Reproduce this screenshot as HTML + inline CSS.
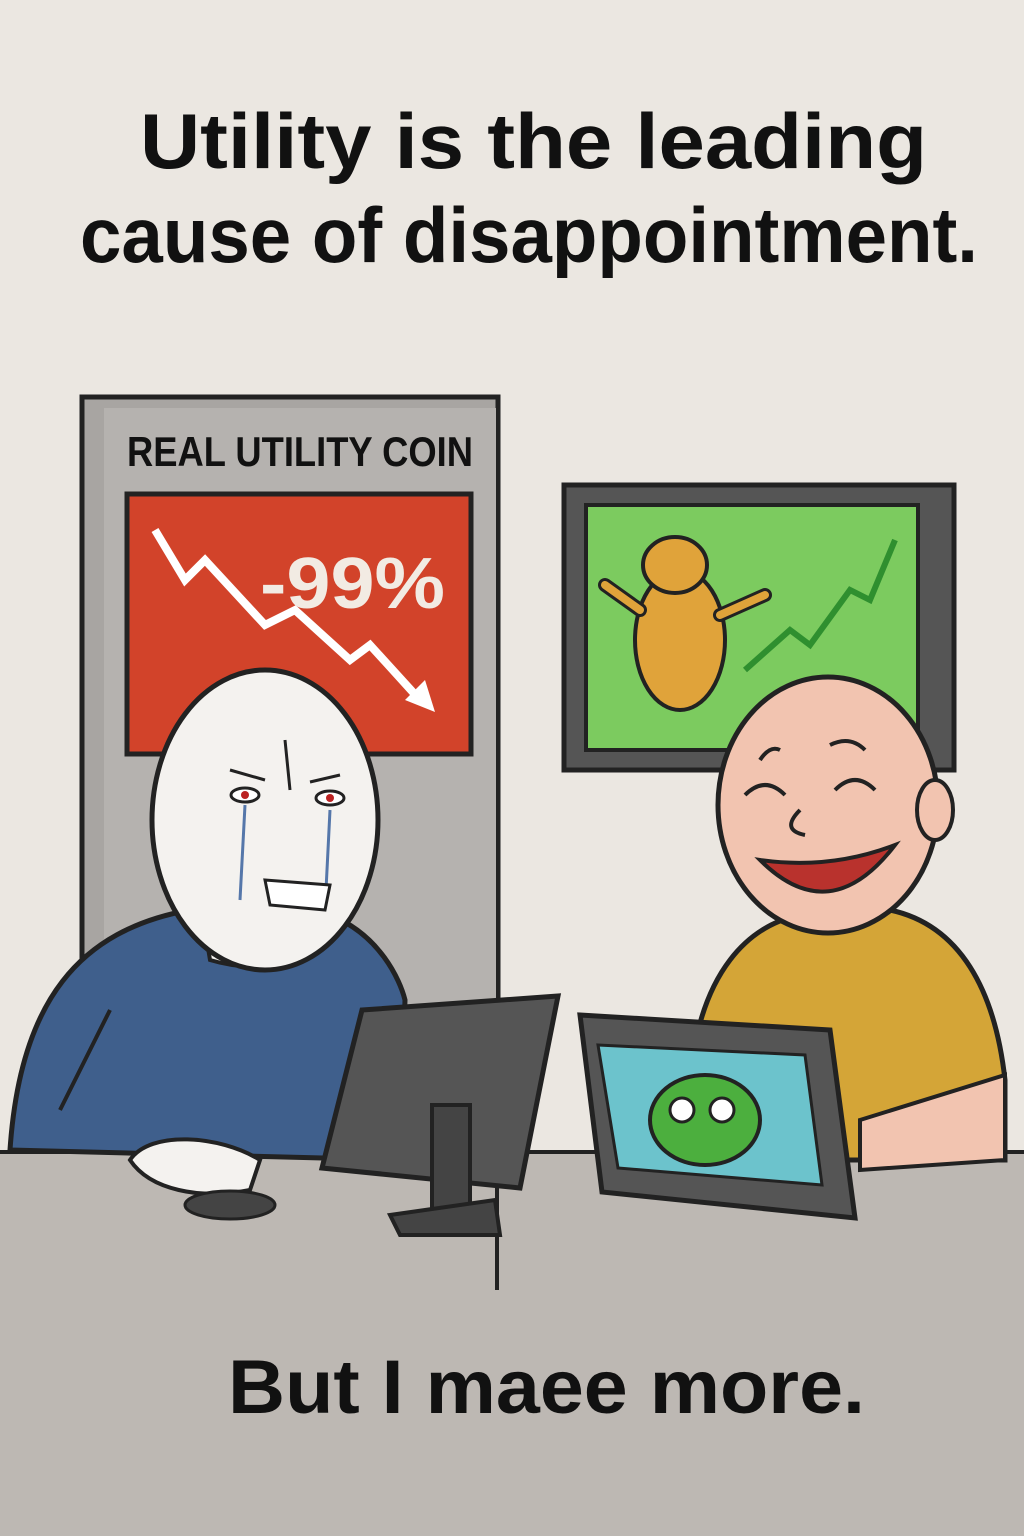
<!DOCTYPE html>
<html><head><meta charset="utf-8"><style>
html,body{margin:0;padding:0;width:1024px;height:1536px;overflow:hidden;background:#ebe7e1}
svg{display:block}
</style></head><body>
<svg width="1024" height="1536" viewBox="0 0 1024 1536" xmlns="http://www.w3.org/2000/svg" font-family="Liberation Sans, sans-serif">
<rect width="1024" height="1536" fill="#ebe7e1"/>
<text x="140" y="168" font-size="78" font-weight="bold" fill="#111" textLength="787" lengthAdjust="spacingAndGlyphs">Utility is the leading</text>
<text x="80" y="262" font-size="78" font-weight="bold" fill="#111" textLength="898" lengthAdjust="spacingAndGlyphs">cause of disappointment.</text>
<rect x="82" y="397" width="416" height="760" fill="#a8a5a2" stroke="#222" stroke-width="5"/>
<rect x="104" y="408" width="392" height="745" fill="#b5b2af"/>
<text x="127" y="466" font-size="42" font-weight="bold" fill="#111" textLength="346" lengthAdjust="spacingAndGlyphs">REAL UTILITY COIN</text>
<rect x="127" y="494" width="344" height="260" fill="#d2432a" stroke="#222" stroke-width="5"/>
<polyline points="155,530 185,580 205,560 265,625 295,610 350,660 370,645 420,700" fill="none" stroke="#fff" stroke-width="8"/>
<polygon points="405,700 435,712 425,680" fill="#fff"/>
<text x="260" y="608" font-size="72" font-weight="bold" fill="#f2ebe3" textLength="185" lengthAdjust="spacingAndGlyphs">-99%</text>
<rect x="564" y="485" width="390" height="285" fill="#555" stroke="#222" stroke-width="5"/>
<rect x="586" y="505" width="332" height="245" fill="#7ccb5f" stroke="#222" stroke-width="4"/>
<polyline points="745,670 790,630 810,645 850,590 870,600 895,540" fill="none" stroke="#2f8f2f" stroke-width="6"/>
<ellipse cx="680" cy="640" rx="45" ry="70" fill="#e0a33a" stroke="#222" stroke-width="4"/>
<ellipse cx="675" cy="565" rx="32" ry="28" fill="#e0a33a" stroke="#222" stroke-width="4"/>
<line x1="640" y1="610" x2="605" y2="585" stroke="#222" stroke-width="14" stroke-linecap="round"/>
<line x1="640" y1="610" x2="605" y2="585" stroke="#e0a33a" stroke-width="8" stroke-linecap="round"/>
<line x1="720" y1="615" x2="765" y2="595" stroke="#222" stroke-width="14" stroke-linecap="round"/>
<line x1="720" y1="615" x2="765" y2="595" stroke="#e0a33a" stroke-width="8" stroke-linecap="round"/>
<rect y="1152" width="1024" height="384" fill="#bdb8b3"/>
<line x1="0" y1="1152" x2="1024" y2="1152" stroke="#222" stroke-width="4"/>
<line x1="497" y1="1150" x2="497" y2="1290" stroke="#222" stroke-width="4"/>
<path d="M10,1150 C20,1000 80,930 190,910 L330,915 C380,935 400,980 405,1000 L400,1160 Z" fill="#3f5f8c" stroke="#222" stroke-width="5"/>
<path d="M60,1110 L110,1010" stroke="#222" stroke-width="4"/>
<path d="M200,900 L210,960 Q260,975 300,955 L300,900Z" fill="#f4f2ef" stroke="#222" stroke-width="4"/>
<ellipse cx="265" cy="820" rx="113" ry="150" fill="#f4f2ef" stroke="#222" stroke-width="5"/>
<ellipse cx="245" cy="795" rx="14" ry="7" fill="#fff" stroke="#222" stroke-width="3"/>
<circle cx="245" cy="795" r="4" fill="#b22"/>
<ellipse cx="330" cy="798" rx="14" ry="7" fill="#fff" stroke="#222" stroke-width="3"/>
<circle cx="330" cy="798" r="4" fill="#b22"/>
<path d="M230,770 L265,780 M340,775 L310,782 M285,740 L290,790" stroke="#222" stroke-width="3" fill="none"/>
<path d="M245,805 L240,900 M330,810 L325,910" stroke="#5577aa" stroke-width="3" fill="none"/>
<path d="M265,880 L330,885 L325,910 L270,905Z" fill="#fff" stroke="#222" stroke-width="3"/>
<path d="M130,1160 C150,1130 220,1135 260,1160 L250,1190 C200,1200 150,1190 130,1160Z" fill="#f4f2ef" stroke="#222" stroke-width="4"/>
<ellipse cx="230" cy="1205" rx="45" ry="14" fill="#444" stroke="#222" stroke-width="3"/>
<polygon points="362,1010 558,996 520,1188 322,1168" fill="#555" stroke="#222" stroke-width="5"/>
<rect x="432" y="1105" width="38" height="110" fill="#444" stroke="#222" stroke-width="4"/>
<polygon points="390,1215 495,1200 500,1235 400,1235" fill="#444" stroke="#222" stroke-width="4"/>
<path d="M690,1080 C700,970 750,925 800,915 L890,910 C960,925 995,990 1005,1080 L1005,1160 L690,1160Z" fill="#d4a537" stroke="#222" stroke-width="5"/>
<path d="M860,1120 L1005,1075 L1005,1160 L860,1170Z" fill="#f2c4b0" stroke="#222" stroke-width="4"/>
<ellipse cx="828" cy="805" rx="110" ry="128" fill="#f2c4b0" stroke="#222" stroke-width="5"/>
<ellipse cx="935" cy="810" rx="18" ry="30" fill="#f2c4b0" stroke="#222" stroke-width="4"/>
<path d="M745,795 Q765,775 785,795 M835,790 Q855,770 875,790 M780,750 Q770,745 760,760 M830,745 Q850,735 865,750" stroke="#222" stroke-width="4" fill="none"/>
<path d="M800,810 Q780,830 805,835" stroke="#222" stroke-width="4" fill="none"/>
<path d="M760,860 Q830,930 895,845 Q830,870 760,860Z" fill="#b9322d" stroke="#222" stroke-width="4"/>
<polygon points="580,1015 830,1030 855,1218 602,1192" fill="#555" stroke="#222" stroke-width="5"/>
<polygon points="598,1045 805,1055 822,1185 618,1168" fill="#6cc3cc" stroke="#222" stroke-width="3"/>
<ellipse cx="705" cy="1120" rx="55" ry="45" fill="#4caf3e" stroke="#222" stroke-width="4"/>
<circle cx="682" cy="1110" r="12" fill="#fff" stroke="#222" stroke-width="3"/>
<circle cx="722" cy="1110" r="12" fill="#fff" stroke="#222" stroke-width="3"/>
<text x="228" y="1413" font-size="76" font-weight="bold" fill="#111" textLength="637" lengthAdjust="spacingAndGlyphs">But I maee more.</text>
</svg>
</body></html>
